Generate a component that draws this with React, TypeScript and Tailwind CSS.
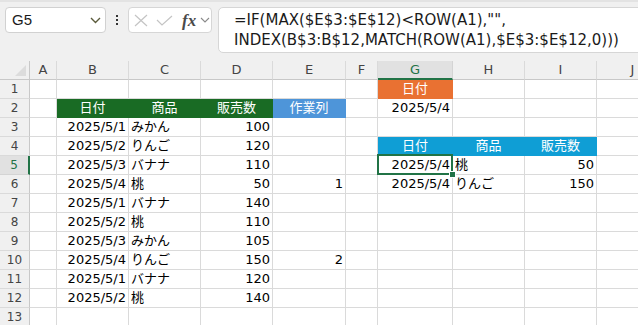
import React from "react"

type Cell = { v: string; a?: "l" | "r" | "c"; f?: string }

const GREEN = "bg-[#196b24] border-[#196b24] text-white"
const BLUE = "bg-[#4e95d9] border-[#4e95d9] text-white"
const ORANGE = "bg-[#e97132] border-[#e97132] text-white"
const CYAN = "bg-[#0f9ed5] border-[#0f9ed5] text-white"

const COLS = ["A", "B", "C", "D", "E", "F", "G", "H", "I", "J"]

const rows: [string, string, string][] = [
  ["2025/5/1", "みかん", "100"],
  ["2025/5/2", "りんご", "120"],
  ["2025/5/3", "バナナ", "110"],
  ["2025/5/4", "桃", "50"],
  ["2025/5/1", "バナナ", "140"],
  ["2025/5/2", "桃", "110"],
  ["2025/5/3", "みかん", "105"],
  ["2025/5/4", "りんご", "150"],
  ["2025/5/1", "バナナ", "120"],
  ["2025/5/2", "桃", "140"],
]

const cells: Record<string, Cell> = {
  B2: { v: "日付", a: "c", f: GREEN },
  C2: { v: "商品", a: "c", f: GREEN },
  D2: { v: "販売数", a: "c", f: GREEN },
  E2: { v: "作業列", a: "c", f: BLUE },
  G1: { v: "日付", a: "c", f: ORANGE },
  G2: { v: "2025/5/4", a: "r" },
  G4: { v: "日付", a: "c", f: CYAN },
  H4: { v: "商品", a: "c", f: CYAN },
  I4: { v: "販売数", a: "c", f: CYAN },
  G5: { v: "2025/5/4", a: "r" },
  H5: { v: "桃", a: "l" },
  I5: { v: "50", a: "r" },
  G6: { v: "2025/5/4", a: "r" },
  H6: { v: "りんご", a: "l" },
  I6: { v: "150", a: "r" },
  E6: { v: "1", a: "r" },
  E10: { v: "2", a: "r" },
}
rows.forEach(([d, p, n], i) => {
  const r = i + 3
  cells["B" + r] = { v: d, a: "r" }
  cells["C" + r] = { v: p, a: "l" }
  cells["D" + r] = { v: n, a: "r" }
})

function FormulaBar() {
  return (
    <div className="h-[61px] bg-[#f0f0f0] border-t-2 border-[#e3e3e3] flex items-start pt-[5px] pl-[5px]">
      {/* Name box */}
      <div className="shrink-0 w-[101px] h-[26px] bg-white border border-[#d1d1d1] rounded-[4px] flex items-center justify-between pl-[6px] pr-[4px]">
        <span className="text-[15px] text-[#1a1a1a] font-['Liberation_Sans',sans-serif]">G5</span>
        <svg width="11" height="7" viewBox="0 0 11 7">
          <path d="M1 1l4.5 4.5L10 1" fill="none" stroke="#5b5b3c" strokeWidth="1.4" />
        </svg>
      </div>
      <div className="shrink-0 w-[22px] h-[26px] flex flex-col items-center justify-center gap-[2px]">
        <div className="w-[2px] h-[2px] bg-[#333]" />
        <div className="w-[2px] h-[2px] bg-[#333]" />
        <div className="w-[2px] h-[2px] bg-[#333]" />
      </div>
      {/* Cancel / enter / fx */}
      <div className="shrink-0 w-[84px] h-[26px] bg-white border border-[#d6d6d6] rounded-[4px] flex items-center pl-[4px]">
        <svg width="14" height="13" viewBox="0 0 14 13" className="ml-[1px]">
          <path d="M1 1l12 11M13 1L1 12" stroke="#c4c4c4" strokeWidth="1.2" fill="none" />
        </svg>
        <svg width="17" height="11" viewBox="0 0 17 11" className="ml-[8px]">
          <path d="M1 5l5 5L16 1" stroke="#c4c4c4" strokeWidth="1.2" fill="none" />
        </svg>
        <span className="ml-[9px] text-[17px] italic font-bold font-['Liberation_Serif',serif] text-[#4a4a4a] leading-none">
          fx
        </span>
        <svg width="10" height="6" viewBox="0 0 10 6" className="ml-[4px]">
          <path d="M1 1l4 4 4-4" fill="none" stroke="#8a8a8a" strokeWidth="1.1" />
        </svg>
      </div>
      {/* Formula */}
      <div className="shrink-0 ml-[6px] w-[440px] h-[46px] bg-white border border-[#d6d6d6] rounded-[5px] pl-[15px] pt-[2px] text-[15px] leading-[20px] text-[#1a1a1a] font-['DejaVu_Sans',sans-serif] whitespace-pre">
        <div>{'=IF(MAX($E$3:$E$12)<ROW(A1),"",'}</div>
        <div>{"INDEX(B$3:B$12,MATCH(ROW(A1),$E$3:$E$12,0)))"}</div>
      </div>
    </div>
  )
}

function Sheet() {
  return (
    <div className="grid grid-cols-[30px_27px_72px_72px_72px_73px_32px_75px_72px_72px_72px] auto-rows-[19px] font-['DejaVu_Sans','Noto_Sans_CJK_JP',sans-serif] text-[13px] text-black">
      {/* Corner */}
      <div className="bg-[#f0f0f0] border-r border-b border-[#c8c8c8] relative">
        <div className="absolute right-[3px] bottom-[3px] w-0 h-0 border-l-[11px] border-l-transparent border-b-[11px] border-b-[#dcdcdc]" />
      </div>
      {COLS.map((c) =>
        c === "G" ? (
          <div
            key={c}
            className="bg-[#e1e1e1] border-r border-[#d4d4d4] border-b-2 border-b-[#217346] flex items-center justify-center text-[13px] text-[#217346] font-['DejaVu_Sans',sans-serif]"
          >
            {c}
          </div>
        ) : (
          <div
            key={c}
            className="bg-[#f0f0f0] border-r border-[#dadada] border-b border-b-[#c8c8c8] flex items-center justify-center text-[13px] text-[#444] font-['DejaVu_Sans',sans-serif]"
          >
            {c}
          </div>
        )
      )}
      {Array.from({ length: 13 }, (_, i) => i + 1).map((r) => (
        <React.Fragment key={r}>
          {r === 5 ? (
            <div className="bg-[#e1e1e1] border-b border-[#d4d4d4] border-r-2 border-r-[#217346] flex items-center justify-center text-[12px] text-[#217346]">
              {r}
            </div>
          ) : (
            <div className="bg-[#f0f0f0] border-b border-[#dadada] border-r border-r-[#c8c8c8] flex items-center justify-center text-[12px] text-[#444]">
              {r}
            </div>
          )}
          {COLS.map((c) => {
            const cell = cells[c + r]
            const align =
              cell?.a === "r" ? "justify-end pr-[2px]" : cell?.a === "c" ? "justify-center" : "justify-start pl-[2px]"
            const fill = cell?.f ?? "border-[#dadada]"
            return (
              <div
                key={c}
                className={`relative flex items-center whitespace-nowrap border-r border-b ${align} ${fill}`}
              >
                {cell?.v}
                {c + r === "G5" && (
                  <div className="absolute z-10 -left-[1px] -top-[2px] -right-[1px] -bottom-[1px] border-2 border-[#217346]">
                    <div className="absolute -right-[5px] -bottom-[5px] w-[7px] h-[7px] bg-[#217346] border border-white" />
                  </div>
                )}
              </div>
            )
          })}
        </React.Fragment>
      ))}
    </div>
  )
}

export default function App() {
  return (
    <div className="w-[638px] h-[325px] overflow-hidden bg-white">
      <FormulaBar />
      <Sheet />
    </div>
  )
}
